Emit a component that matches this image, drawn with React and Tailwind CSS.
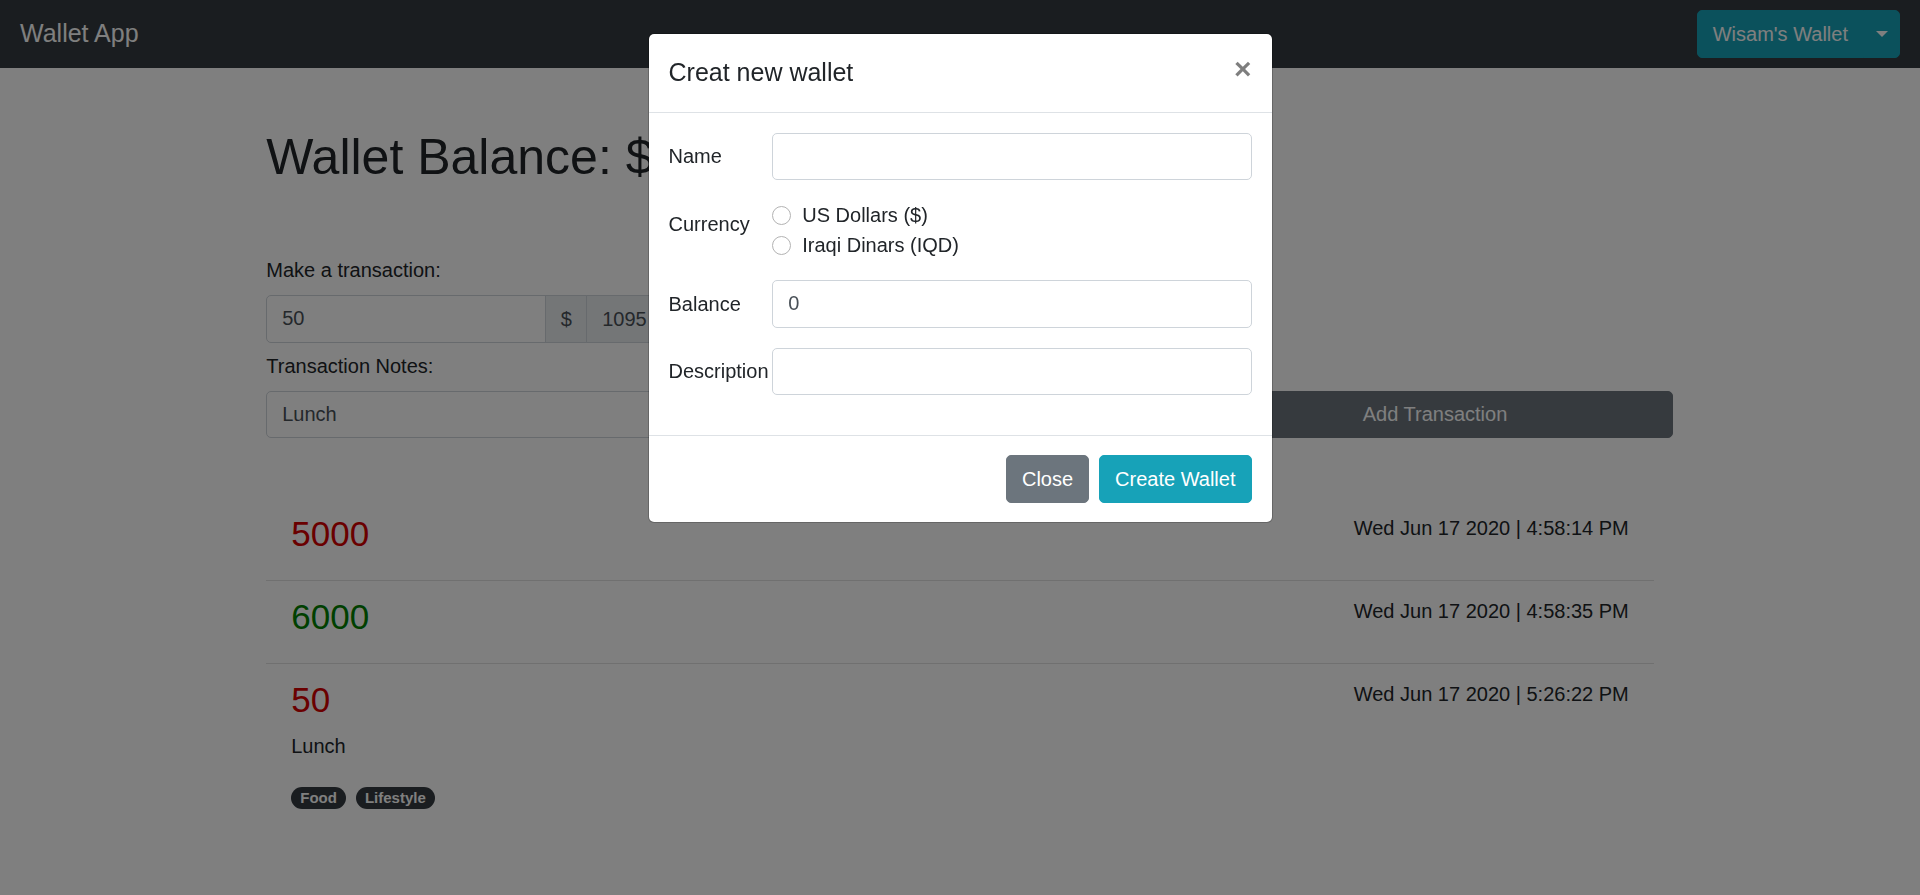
import React from "react";

const transactions = [
  { amount: "5000", color: "text-[#d40000]", date: "Wed Jun 17 2020 | 4:58:14 PM" },
  { amount: "6000", color: "text-[#008000]", date: "Wed Jun 17 2020 | 4:58:35 PM" },
  {
    amount: "50",
    color: "text-[#d40000]",
    date: "Wed Jun 17 2020 | 5:26:22 PM",
    notes: "Lunch",
    tags: ["Food", "Lifestyle"],
  },
];

function Navbar() {
  return (
    <nav className="h-[68px] bg-[#343a40] flex items-center justify-between px-[20px]">
      <span className="text-[25px] leading-[37.5px] text-white">Wallet App</span>
      <div className="flex">
        <button className="h-[47.5px] pl-[15px] pr-[15px] bg-[#17a2b8] border-[1.25px] border-[#17a2b8] text-white text-[20px] leading-[30px] rounded-l-[5px]">
          Wisam's Wallet
        </button>
        <button className="h-[47.5px] w-[37px] -ml-px flex items-center justify-center bg-[#17a2b8] border-[1.25px] border-[#17a2b8] rounded-r-[5px]">
          <span className="w-0 h-0 border-l-[6px] border-r-[6px] border-t-[6px] border-l-transparent border-r-transparent border-t-white" />
        </button>
      </div>
    </nav>
  );
}

function TransactionItem({ t, last }) {
  return (
    <li className={"px-[25px] py-[15px] " + (last ? "" : "border-b-[1.25px] border-[#e0e0e0]")}>
      <div className="flex justify-between items-start">
        <div>
          <h3 className={"text-[35px] leading-[42px] mb-[10px] " + t.color}>{t.amount}</h3>
          {t.notes && <p className="mb-[20px]">{t.notes}</p>}
          {t.tags && (
            <div className="flex gap-[10px] pt-[5.5px] h-[30px]">
              {t.tags.map((tag) => (
                <span
                  key={tag}
                  className="inline-block h-[22.5px] px-[9px] rounded-full bg-[#343a40] text-white text-[15px] font-bold leading-[22.5px]"
                >
                  {tag}
                </span>
              ))}
            </div>
          )}
        </div>
        <span className="leading-[30px]">{t.date}</span>
      </div>
    </li>
  );
}

function Page() {
  return (
    <main className="w-[1387.5px] mx-auto pt-[59px]">
      <h1 className="text-[50px] leading-[60px] mb-[68px]">Wallet Balance: $</h1>

      <label className="block mb-[10px]">Make a transaction:</label>
      <div className="flex h-[47.5px]">
        <input
          readOnly
          value="50"
          className="w-[280px] h-full border-[1.25px] border-[#ced4da] rounded-l-[5px] px-[15px] text-[#495057] outline-none"
        />
        <span className="-ml-px w-[42px] flex items-center justify-center bg-[#e9ecef] border-[1.25px] border-[#ced4da] text-[#495057]">
          $
        </span>
        <span className="-ml-px w-[116px] flex items-center px-[15px] bg-[#e9ecef] border-[1.25px] border-[#ced4da] rounded-r-[5px] text-[#495057]">
          1095
        </span>
      </div>

      <div className="flex items-end mt-[8px]">
        <div className="w-[912.5px] shrink-0">
          <label className="block mb-[10px]">Transaction Notes:</label>
          <input
            readOnly
            value="Lunch"
            className="w-full h-[47.5px] border-[1.25px] border-[#ced4da] rounded-[5px] px-[15px] text-[#495057] outline-none"
          />
        </div>
        <button className="shrink-0 ml-[18.75px] w-[475px] h-[47.5px] bg-[#6c757d] border-[1.25px] border-[#6c757d] rounded-[5px] text-white">
          Add Transaction
        </button>
      </div>

      <ul className="mt-[60px]">
        {transactions.map((t, i) => (
          <TransactionItem key={i} t={t} last={i === transactions.length - 1} />
        ))}
      </ul>
    </main>
  );
}

function FormRow({ label, children }) {
  return (
    <div className="flex mb-[20px]">
      <label className="w-[66.25px] mr-[37.5px] whitespace-nowrap py-[8.75px] leading-[30px]">{label}</label>
      <div className="flex-1">{children}</div>
    </div>
  );
}

function Radio({ label }) {
  return (
    <div className="flex items-center h-[30px]">
      <span className="w-[19px] h-[19px] rounded-full border border-[#b3b3b3] bg-white" />
      <span className="ml-[11px]">{label}</span>
    </div>
  );
}

function WalletModal() {
  const inputCls =
    "w-full h-[47.5px] border-[1.25px] border-[#ced4da] rounded-[5px] px-[15px] text-[#495057] outline-none";
  return (
    <>
      <div className="fixed inset-0 bg-black/50 z-40" />
      <div className="fixed inset-0 z-50 flex justify-center items-start pt-[33px]">
        <div className="w-[625px] bg-white border-[1.25px] border-black/20 bg-clip-padding rounded-[6px]">
          <div className="flex items-start justify-between p-[20px] border-b-[1.25px] border-[#dee2e6]">
            <h5 className="text-[25px] leading-[37.5px]">Creat new wallet</h5>
            <button className="p-[20px] -m-[20px] text-[30px] font-bold leading-none text-black opacity-50">
              ×
            </button>
          </div>
          <div className="p-[20px]">
            <FormRow label="Name">
              <input className={inputCls} readOnly value="" />
            </FormRow>
            <FormRow label="Currency">
              <div>
                <Radio label="US Dollars ($)" />
                <Radio label="Iraqi Dinars (IQD)" />
              </div>
            </FormRow>
            <FormRow label="Balance">
              <input className={inputCls} readOnly value="0" />
            </FormRow>
            <FormRow label="Description">
              <input className={inputCls} readOnly value="" />
            </FormRow>
          </div>
          <div className="flex justify-end items-center px-[20px] pt-[19px] pb-[19px] border-t-[1.25px] border-[#dee2e6]">
            <button className="h-[47.5px] px-[15px] bg-[#6c757d] border-[1.25px] border-[#6c757d] rounded-[5px] text-white">
              Close
            </button>
            <button className="ml-[10px] h-[47.5px] px-[15px] bg-[#17a2b8] border-[1.25px] border-[#17a2b8] rounded-[5px] text-white">
              Create Wallet
            </button>
          </div>
        </div>
      </div>
    </>
  );
}

export default function App() {
  return (
    <div className="min-h-[895px] bg-white text-[#212529] text-[20px] leading-[30px] font-['Liberation_Sans',Arial,sans-serif]">
      <Navbar />
      <Page />
      <WalletModal />
    </div>
  );
}
